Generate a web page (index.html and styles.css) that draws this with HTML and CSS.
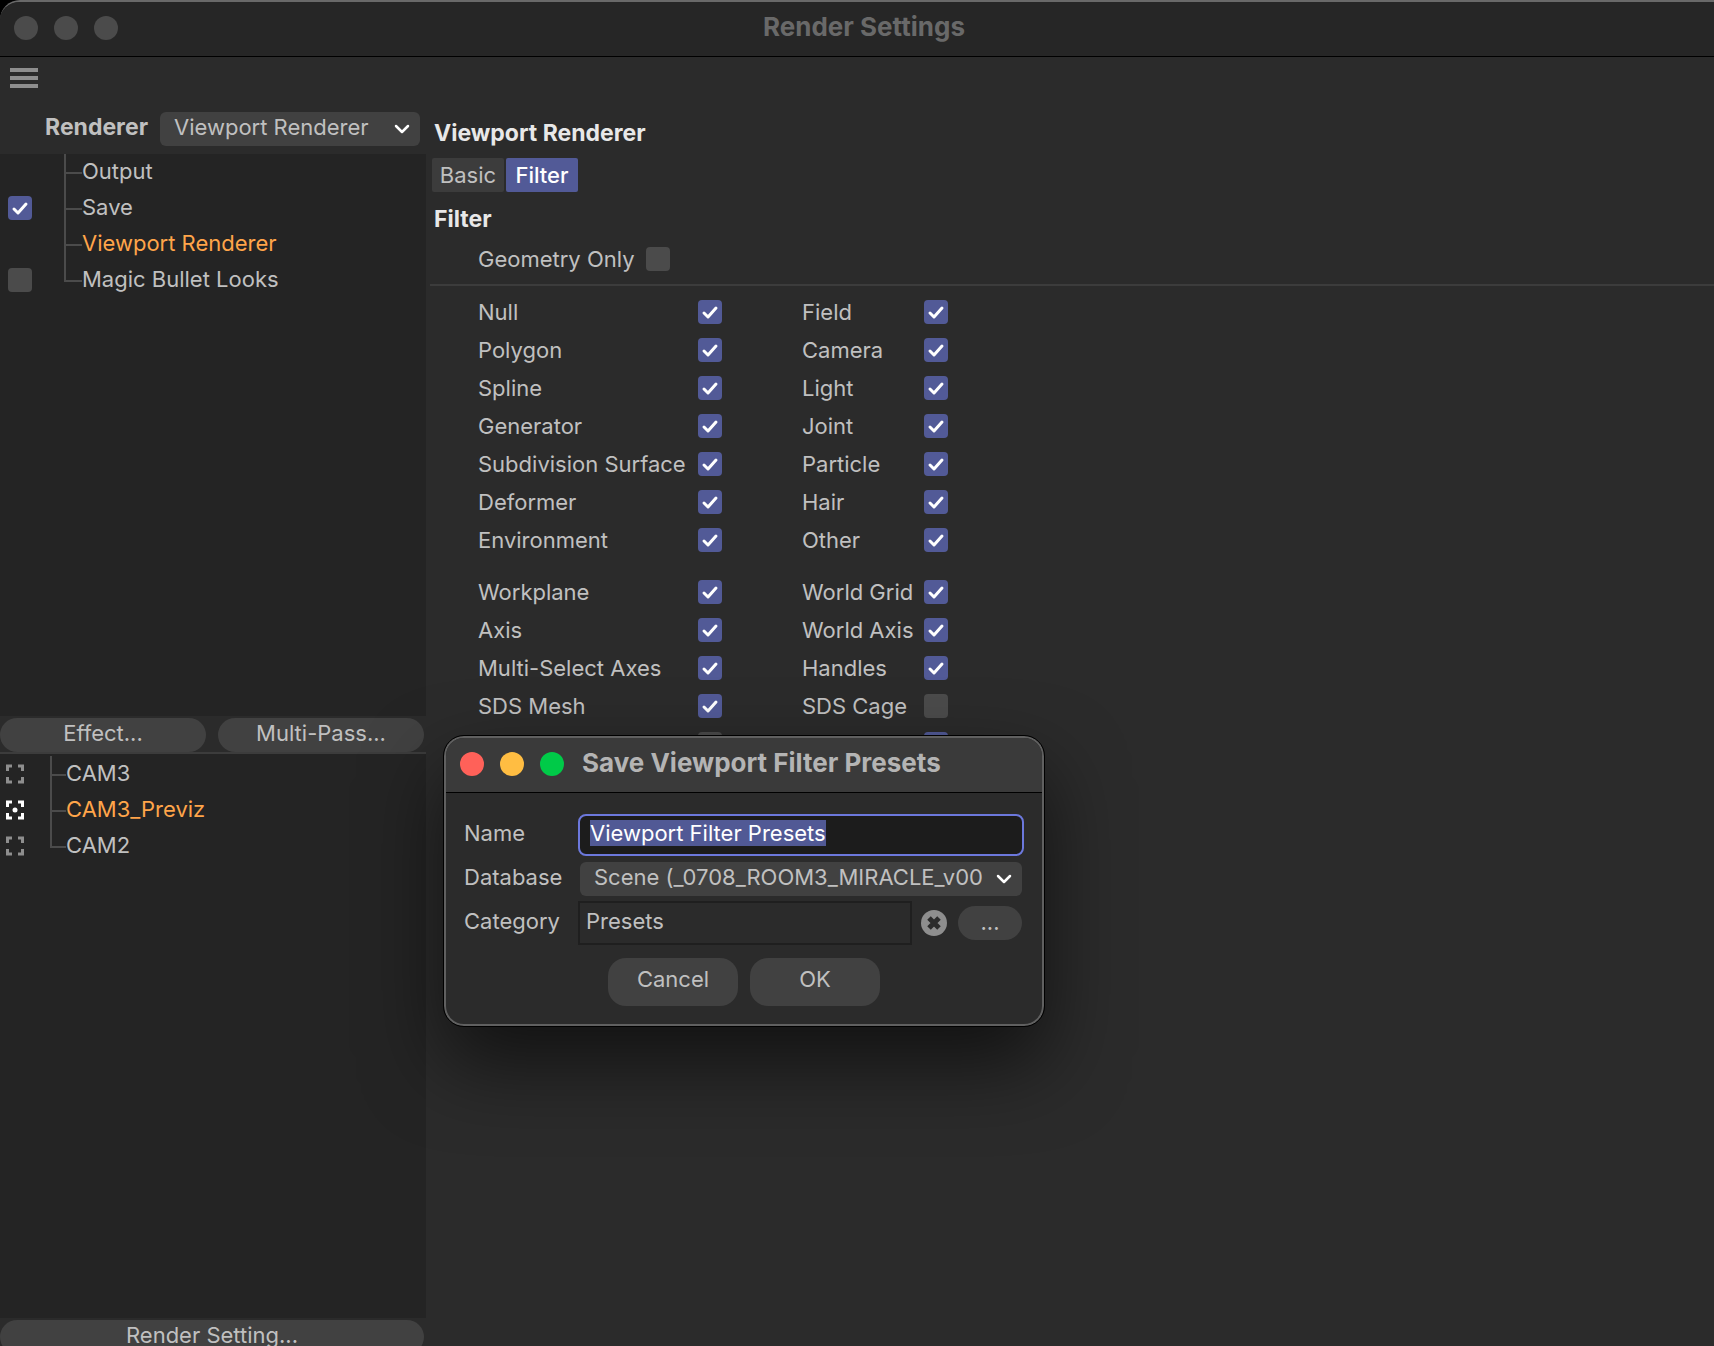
FILE: index.html
```html
<!DOCTYPE html>
<html lang="en">
<head>
<meta charset="utf-8">
<title>Render Settings</title>
<link rel="stylesheet" href="styles.css">
</head>
<body>
<div class="window">
  <header class="titlebar">
    <div class="lights"><span class="light"></span><span class="light"></span><span class="light"></span></div>
    <h1 class="window-title">Render Settings</h1>
  </header>

  <div class="main">
    <aside class="sidebar">
      <button class="menu-button" aria-label="Menu">
        <svg width="28" height="20" viewBox="0 0 28 20" fill="#8e8e8e"><path d="M0 0h28v4H0zM0 8h28v4H0zM0 16h28v4H0z"/></svg>
      </button>
      <div class="renderer">
        <label for="renderer">Renderer</label>
        <div class="select renderer-select">
          <select id="renderer"><option>Viewport Renderer</option></select>
          <svg class="chevron" width="16" height="12" viewBox="0 0 16 12"><path d="M2 3l6 6 6-6"/></svg>
        </div>
      </div>

      <ul class="tree settings-tree">
        <li><span class="slot"></span><span class="branch"></span><span class="item">Output</span></li>
        <li><span class="slot"><input type="checkbox" id="save" checked></span><span class="branch"></span><label class="item" for="save">Save</label></li>
        <li class="active"><span class="slot"></span><span class="branch"></span><span class="item">Viewport Renderer</span></li>
        <li><span class="slot"><input type="checkbox" id="looks"></span><span class="branch"></span><label class="item" for="looks">Magic Bullet Looks</label></li>
      </ul>

      <div class="button-row">
        <button class="pill">Effect...</button>
        <button class="pill">Multi-Pass...</button>
      </div>

      <ul class="tree preset-tree">
        <li><span class="slot"><svg class="frame" width="18" height="20" viewBox="0 0 18 20"><path d="M1.500 7V2H6M12 2h4.500v5M16.500 13v5H12M6 18H1.500v-5"/></svg></span><span class="branch"></span><span class="item">CAM3</span></li>
        <li class="active"><span class="slot"><svg class="frame" width="18" height="20" viewBox="0 0 18 20"><path d="M1.500 7V2H6M12 2h4.500v5M16.500 13v5H12M6 18H1.500v-5"/><circle cx="9" cy="10" r="2.500"/></svg></span><span class="branch"></span><span class="item">CAM3_Previz</span></li>
        <li><span class="slot"><svg class="frame" width="18" height="20" viewBox="0 0 18 20"><path d="M1.500 7V2H6M12 2h4.500v5M16.500 13v5H12M6 18H1.500v-5"/></svg></span><span class="branch"></span><span class="item">CAM2</span></li>
      </ul>

      <div class="button-row">
        <button class="pill">Render Setting...</button>
      </div>
    </aside>

    <section class="content">
      <h2>Viewport Renderer</h2>
      <div class="tabs">
        <button class="tab">Basic</button>
        <button class="tab selected">Filter</button>
      </div>
      <h2>Filter</h2>
      <div class="geometry">
        <label for="geometry">Geometry Only</label>
        <input type="checkbox" id="geometry">
      </div>

      <div class="filters">
        <label for="f1">Null</label><input type="checkbox" id="f1" checked>
        <label for="f2">Field</label><input type="checkbox" id="f2" checked>
        <label for="f3">Polygon</label><input type="checkbox" id="f3" checked>
        <label for="f4">Camera</label><input type="checkbox" id="f4" checked>
        <label for="f5">Spline</label><input type="checkbox" id="f5" checked>
        <label for="f6">Light</label><input type="checkbox" id="f6" checked>
        <label for="f7">Generator</label><input type="checkbox" id="f7" checked>
        <label for="f8">Joint</label><input type="checkbox" id="f8" checked>
        <label for="f9">Subdivision Surface</label><input type="checkbox" id="f9" checked>
        <label for="f10">Particle</label><input type="checkbox" id="f10" checked>
        <label for="f11">Deformer</label><input type="checkbox" id="f11" checked>
        <label for="f12">Hair</label><input type="checkbox" id="f12" checked>
        <label for="f13">Environment</label><input type="checkbox" id="f13" checked>
        <label for="f14">Other</label><input type="checkbox" id="f14" checked>
      </div>
      <div class="filters">
        <label for="g1">Workplane</label><input type="checkbox" id="g1" checked>
        <label for="g2">World Grid</label><input type="checkbox" id="g2" checked>
        <label for="g3">Axis</label><input type="checkbox" id="g3" checked>
        <label for="g4">World Axis</label><input type="checkbox" id="g4" checked>
        <label for="g5">Multi-Select Axes</label><input type="checkbox" id="g5" checked>
        <label for="g6">Handles</label><input type="checkbox" id="g6" checked>
        <label for="g7">SDS Mesh</label><input type="checkbox" id="g7" checked>
        <label for="g8">SDS Cage</label><input type="checkbox" id="g8">
        <label for="g9">Annotation</label><input type="checkbox" id="g9">
        <label for="g10">Guides</label><input type="checkbox" id="g10" checked>
      </div>
    </section>
  </div>
</div>

<form class="dialog" role="dialog" aria-labelledby="dialog-title">
  <header class="dialog-bar">
    <div class="lights"><span class="light red"></span><span class="light yellow"></span><span class="light green"></span></div>
    <h1 id="dialog-title">Save Viewport Filter Presets</h1>
  </header>
  <div class="dialog-body">
    <div class="field">
      <label for="name">Name</label>
      <input type="text" id="name" class="name-input" value="Viewport Filter Presets" autofocus>
    </div>
    <div class="field">
      <label for="database">Database</label>
      <div class="select database-select">
        <select id="database"><option>Scene (_0708_ROOM3_MIRACLE_v00</option></select>
        <svg class="chevron" width="16" height="12" viewBox="0 0 16 12"><path d="M2 3l6 6 6-6"/></svg>
      </div>
    </div>
    <div class="field">
      <label for="category">Category</label>
      <input type="text" id="category" class="category-input" value="Presets">
      <button type="button" class="clear" aria-label="Clear">
        <svg width="26" height="26" viewBox="0 0 26 26"><circle cx="13" cy="13" r="13" fill="#8e8e8e"/><path d="M8 8l10 10M18 8L8 18" stroke="#2b2b2b" stroke-width="5"/></svg>
      </button>
      <button type="button" class="pill browse">...</button>
    </div>
    <div class="actions">
      <button type="button">Cancel</button>
      <button type="button">OK</button>
    </div>
  </div>
</form>
<script>
document.getElementById('name').select();
</script>
</body>
</html>
```
FILE: styles.css
```css
* {
  box-sizing: border-box;
}

body {
  margin: 0;
  height: 100vh;
  overflow: hidden;
  background: #000;
  color: #c0c0c0;
  font-family: Inter, "Liberation Sans", sans-serif;
  font-size: 22px;
  line-height: 28px;
}

h1, h2, ul {
  margin: 0;
  padding: 0;
  font-weight: bold;
}

button, input, select {
  margin: 0;
  padding: 0;
  border: none;
  font: inherit;
  color: inherit;
}

/* The window runs a little past the bottom of the screen */
.window {
  display: flex;
  flex-direction: column;
  height: calc(100vh + 8px);
  background: #2b2b2b;
  border-top: 2px solid #696969;
  border-radius: 20px 0 0 0;
  overflow: hidden;
}

.titlebar {
  display: grid;
  grid-template-columns: 1fr auto 1fr;
  align-items: center;
  height: 55px;
  padding: 0 0 2px 14px;
  background: #262626;
  border-bottom: 1px solid #000;
}

.lights {
  display: flex;
  gap: 16px;
}

.light {
  width: 24px;
  height: 24px;
  border-radius: 50%;
  background: #4b4b4b;
}

.red { background: #ff6159; }
.yellow { background: #ffbd42; }
.green { background: #00ca48; }

.titlebar h1, .dialog h1 {
  padding-bottom: 2px;
  font-size: 26px;
}

.window-title {
  color: #696969;
}

.main {
  display: flex;
  flex: 1;
  min-height: 0;
}

/* Left column */
.sidebar {
  display: flex;
  flex-direction: column;
  width: 426px;
}

.menu-button {
  align-self: flex-start;
  margin: 11px 10px 24px;
  height: 20px;
  line-height: 0;
  background: none;
}

.renderer {
  display: flex;
  align-items: center;
  justify-content: flex-end;
  gap: 12px;
  padding: 0 6px 8px 0;
}

.renderer label {
  padding-bottom: 4px;
  font-size: 23px;
  font-weight: bold;
}

.select {
  position: relative;
}

.select select {
  display: block;
  width: 100%;
  height: 34px;
  padding: 0 38px 4px 14px;
  appearance: none;
  background: #414141;
  border-radius: 6px;
}

.renderer-select {
  width: 260px;
}

.chevron {
  position: absolute;
  right: 10px;
  top: 11px;
  fill: none;
  stroke: #fff;
  stroke-width: 2.500px;
  stroke-linecap: round;
  stroke-linejoin: round;
  pointer-events: none;
}

input[type="checkbox"] {
  display: block;
  width: 24px;
  height: 24px;
  appearance: none;
  border-radius: 4px;
  background: #4b4b4b;
}

input[type="checkbox"]:checked {
  background: #525a97 url("data:image/svg+xml,%3Csvg xmlns='http://www.w3.org/2000/svg' viewBox='0 0 24 24'%3E%3Cpath d='M6 13l4 4 8-9' fill='none' stroke='white' stroke-width='3' stroke-linecap='round' stroke-linejoin='round'/%3E%3C/svg%3E");
}

.tree {
  list-style: none;
  background: #242424;
  font-weight: normal;
}

.tree li {
  display: flex;
  align-items: center;
  height: 36px;
}

.tree .active {
  color: #ffa54a;
}

.settings-tree {
  height: 562px;
}

.preset-tree {
  flex: 1;
  padding-top: 2px;
  border-top: 2px solid #3c3c3c;
}

.slot {
  display: flex;
  align-items: center;
  width: 64px;
  height: 36px;
  padding-left: 8px;
}

.preset-tree .slot {
  width: 50px;
  padding-left: 6px;
}

.item {
  padding-bottom: 2px;
}

.branch {
  align-self: stretch;
  width: 18px;
  border-left: 2px solid #4b4b4b;
  background: linear-gradient(#4b4b4b, #4b4b4b) 0 18px / 100% 2px no-repeat;
}

.preset-tree .branch {
  width: 16px;
}

.tree li:last-child .branch {
  align-self: flex-start;
  height: 20px;
}

.frame {
  fill: none;
  stroke: #8e8e8e;
  stroke-width: 3px;
}

.active .frame {
  stroke: #fff;
}

.frame circle {
  fill: #fff;
  stroke: none;
}

.button-row {
  display: flex;
  gap: 12px;
  padding: 2px 2px 0 0;
}

.pill {
  flex: 1;
  height: 34px;
  padding-bottom: 4px;
  border-radius: 17px;
  background: #414141;
}

/* Right column */
.content {
  flex: 1;
  padding: 62px 0 0 4px;
}

.content h2 {
  padding-left: 4px;
  font-size: 23px;
  line-height: 28px;
  color: #e8e8e8;
}

.tabs {
  display: flex;
  gap: 2px;
  margin: 11px 0 13px 2px;
}

.tab {
  width: 72px;
  height: 34px;
  border-radius: 2px;
  background: #3c3c3c;
}

.tab.selected {
  background: #525a97;
  color: #fff;
  font-weight: 500;
}

.geometry {
  display: flex;
  align-items: center;
  gap: 11px;
  height: 53px;
  padding-left: 48px;
  border-bottom: 2px solid #3c3c3c;
}

.filters {
  display: grid;
  grid-template-columns: 220px 104px 122px 24px;
  grid-auto-rows: 38px;
  align-items: center;
  padding: 7px 0 0 48px;
}

.filters + .filters {
  padding-top: 14px;
}

/* Save dialog */
.dialog {
  position: absolute;
  left: 444px;
  top: 736px;
  width: 600px;
  background: #2b2b2b;
  border: 2px solid #606060;
  border-radius: 20px;
  outline: 1px solid #000;
  box-shadow: 0 36px 80px rgba(0, 0, 0, 0.6);
  overflow: hidden;
}

.dialog-bar {
  display: flex;
  align-items: center;
  gap: 18px;
  height: 55px;
  padding: 0 0 2px 14px;
  background: #3a3a3a;
  border-bottom: 1px solid #000;
}

.dialog h1 {
  color: #b4b4b4;
}

.dialog-body {
  padding: 20px 18px 18px;
}

.field {
  display: flex;
  align-items: center;
  height: 44px;
}

.field label {
  width: 114px;
  padding-bottom: 4px;
}

.name-input {
  flex: 1;
  height: 42px;
  padding: 0 10px 4px;
  background: #1c1c1c;
  border: 2px solid #6c78dc;
  border-radius: 8px;
  outline: none;
}

.name-input::selection {
  background: rgba(82, 90, 151, 0.99);
  color: #fff;
}

.database-select {
  flex: 1;
  margin: 0 2px;
}

.category-input {
  flex: 1;
  min-width: 0;
  height: 44px;
  padding: 0 6px 4px;
  background: #2b2b2b;
  border: 2px solid #1f1f1f;
}

.clear {
  height: 26px;
  margin: 0 11px 0 9px;
  line-height: 0;
  background: none;
}

.browse {
  flex: none;
  width: 64px;
  margin-right: 2px;
  padding-bottom: 2px;
}

.actions {
  display: flex;
  justify-content: center;
  gap: 12px;
  margin-top: 13px;
}

.actions button {
  width: 130px;
  height: 48px;
  padding-bottom: 6px;
  border-radius: 18px;
  background: #414141;
}
```
